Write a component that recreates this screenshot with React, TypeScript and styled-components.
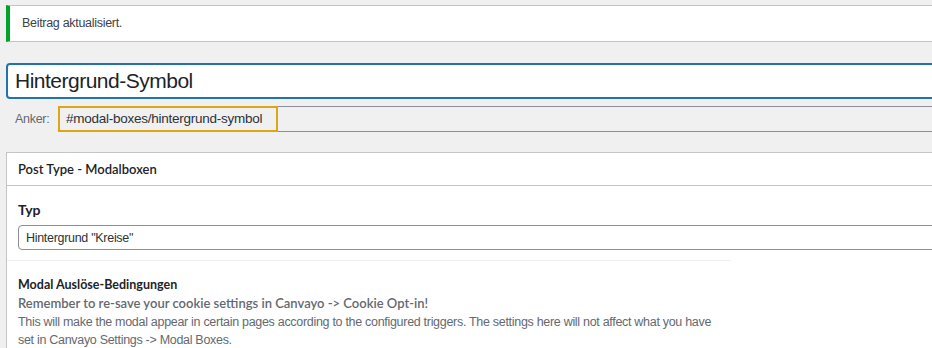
import React from 'react';
import styled, { createGlobalStyle } from 'styled-components';

const GlobalStyle = createGlobalStyle`
  html, body {
    margin: 0;
    background: #f0f0f1;
    overflow: hidden;
  }
  body {
    font-family: "Liberation Sans", Arial, sans-serif;
    font-size: 12.5px;
    letter-spacing: -0.3px;
    color: #3c434a;
  }
`;

// semibold text in the admin UI reads closer to Lato than to Arial bold
const strongFont = `Lato, "Liberation Sans", Arial, sans-serif`;

// === LAYOUT ===
const Wrap = styled.div`
  width: 1300px;
  padding: 5px 0 0 6px;
  display: flex;
  flex-direction: column;
`;

const Notice = styled.div`
  background: #fff;
  border: 1px solid #c3c4c7;
  border-left: 4px solid #00a32a;
  padding: 8px 12px;
  line-height: 19px;
  color: #3c434a;
`;

const TitleField = styled.div`
  margin-top: 21px;
  height: 36px;
  box-sizing: border-box;
  border: 2px solid #2271b1;
  border-radius: 4px;
  background: #fff;
  padding: 0 7px;
  display: flex;
  align-items: center;
  font-size: 21px;
  letter-spacing: -0.5px;
  color: #1d2327;
`;

const AnchorRow = styled.div`
  margin-top: 6px;
  display: flex;
  align-items: center;
  padding-left: 9px;
`;

const AnchorLabel = styled.span`
  width: 43px;
  color: #646970;
`;

const AnchorValue = styled.span`
  width: 220px;
  height: 26px;
  box-sizing: border-box;
  border: 2px solid #dba617;
  padding: 0 6px;
  display: flex;
  align-items: center;
  font-size: 13.5px;
  letter-spacing: -0.25px;
  color: #2c3338;
  white-space: nowrap;
`;

const AnchorRest = styled.span`
  flex: 1;
  height: 26px;
  box-sizing: border-box;
  border-top: 1px solid #8c8f94;
  border-bottom: 1px solid #8c8f94;
  margin-top: 1px;
`;

const Postbox = styled.div`
  margin-top: 20px;
  background: #fff;
  border: 1px solid #c3c4c7;
  height: 400px;
`;

const PostboxHeader = styled.h2`
  margin: 0;
  height: 33px;
  box-sizing: border-box;
  border-bottom: 1px solid #c3c4c7;
  padding: 0 11px;
  display: flex;
  align-items: center;
  font-family: ${strongFont};
  font-size: 13px;
  font-weight: 600;
  letter-spacing: 0;
  color: #1d2327;
`;

const Section = styled.div<{ $width?: number; $divided?: boolean }>`
  box-sizing: border-box;
  width: ${p => (p.$width ? `${p.$width}px` : 'auto')};
  padding: ${p => (p.$divided ? '15px 8px 0 11px' : '15px 0 10px 11px')};
  border-top: ${p => (p.$divided ? '1px solid #f0f0f0' : 'none')};
`;

const FieldLabel = styled.div<{ $size: number }>`
  font-family: ${strongFont};
  font-size: ${p => p.$size}px;
  font-weight: 700;
  letter-spacing: 0;
  line-height: 18px;
  color: #1d2327;
`;

const Select = styled.div`
  margin-top: 6px;
  height: 25px;
  box-sizing: border-box;
  border: 1px solid #8c8f94;
  border-radius: 4px;
  padding: 0 7px;
  display: flex;
  align-items: center;
  color: #2c3338;
`;

const Description = styled.p<{ $strong?: boolean }>`
  margin: 0;
  line-height: 18.5px;
  color: #646970;
  ${p =>
    p.$strong &&
    `
    font-family: ${strongFont};
    font-size: 13px;
    font-weight: 600;
    letter-spacing: 0;
  `}
`;

const App: React.FC = () => {
  return (
    <>
      <GlobalStyle />
      <Wrap>
        <Notice>Beitrag aktualisiert.</Notice>

        <TitleField>Hintergrund-Symbol</TitleField>

        <AnchorRow>
          <AnchorLabel>Anker:</AnchorLabel>
          <AnchorValue>#modal-boxes/hintergrund-symbol</AnchorValue>
          <AnchorRest />
        </AnchorRow>

        <Postbox>
          <PostboxHeader>Post Type - Modalboxen</PostboxHeader>
          <Section>
            <FieldLabel $size={14}>Typ</FieldLabel>
            <Select>Hintergrund "Kreise"</Select>
          </Section>
          <Section $width={724} $divided>
            <FieldLabel $size={12.5}>Modal Auslöse-Bedingungen</FieldLabel>
            <Description $strong>
              Remember to re-save your cookie settings in Canvayo -&gt; Cookie Opt-in!
            </Description>
            <Description>
              This will make the modal appear in certain pages according to the configured triggers. The
              settings here will not affect what you have set in Canvayo Settings -&gt; Modal Boxes.
            </Description>
          </Section>
        </Postbox>
      </Wrap>
    </>
  );
};

export default App;
